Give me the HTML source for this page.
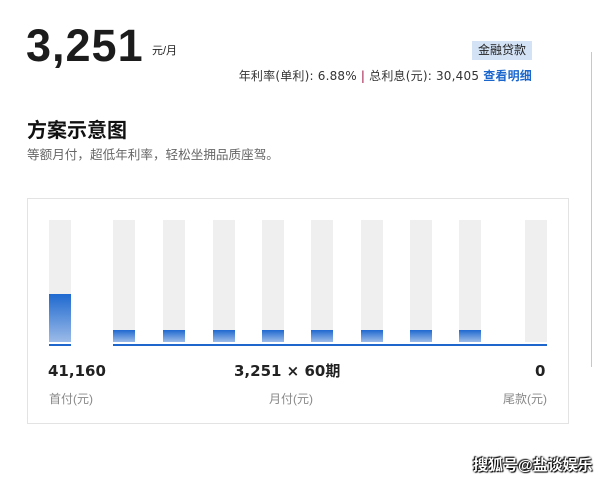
<!DOCTYPE html>
<html><head><meta charset="utf-8"><style>
*{margin:0;padding:0;box-sizing:border-box}
body{width:612px;height:481px;background:#fff;position:relative;overflow:hidden;font-family:"Liberation Sans","Noto Sans CJK SC",sans-serif;color:#222}
.a{position:absolute;white-space:nowrap}
.bar{position:absolute;top:220px;width:22px;height:122px;background:#efefef}
.fill{position:absolute;left:0;bottom:0;width:100%;background:linear-gradient(#1f69d0,#9cbbe8)}
.num{position:absolute;top:361px;height:20px;line-height:20px;font-size:15px;font-weight:bold;color:#222;font-family:"DejaVu Sans","Noto Sans CJK SC",sans-serif;white-space:nowrap}
</style></head><body>
<div class="a" style="left:26px;top:20px;font-size:45px;font-weight:bold;color:#1c1c1c;letter-spacing:1px">3,251</div>
<div class="a" style="left:152px;top:42px;font-size:11px">元/月</div>
<div class="a" style="left:472px;top:41px;width:60px;height:19px;background:#d3e2f5;font-size:12px;line-height:19px;text-align:center">金融贷款</div>
<div class="a" style="right:80px;top:67px;font-size:12px;color:#333;font-family:'DejaVu Sans','Noto Sans CJK SC',sans-serif;letter-spacing:0.2px">年利率(单利): 6.88% <span style="color:#a01040">|</span> 总利息(元): 30,405 <b style="color:#1a66cc">查看明细</b></div>
<div class="a" style="left:27px;top:114px;font-size:20px;font-weight:bold;color:#111">方案示意图</div>
<div class="a" style="left:27px;top:144px;font-size:12.6px;color:#666">等额月付，超低年利率，轻松坐拥品质座驾。</div>
<div class="a" style="left:591px;top:52px;width:1px;height:315px;background:#c8c8c8"></div>
<div class="a" style="left:27px;top:198px;width:542px;height:226px;border:1px solid #e3e3e3"></div>
<div class="bar" style="left:49px"><div class="fill" style="height:48px"></div></div>
<div class="bar" style="left:113px"><div class="fill" style="height:12px"></div></div>
<div class="bar" style="left:163px"><div class="fill" style="height:12px"></div></div>
<div class="bar" style="left:213px"><div class="fill" style="height:12px"></div></div>
<div class="bar" style="left:262px"><div class="fill" style="height:12px"></div></div>
<div class="bar" style="left:311px"><div class="fill" style="height:12px"></div></div>
<div class="bar" style="left:361px"><div class="fill" style="height:12px"></div></div>
<div class="bar" style="left:410px"><div class="fill" style="height:12px"></div></div>
<div class="bar" style="left:459px"><div class="fill" style="height:12px"></div></div>
<div class="bar" style="left:525px"></div>
<div class="a" style="left:49px;top:344px;width:22px;height:2px;background:#1f66cc"></div>
<div class="a" style="left:113px;top:344px;width:434px;height:2px;background:#1f66cc"></div>
<div class="num" style="left:48px">41,160</div>
<div class="num" style="left:234px">3,251 × 60期</div>
<div class="num" style="left:535px">0</div>
<div class="a" style="left:49px;top:390px;font-size:12px;color:#888">首付(元)</div>
<div class="a" style="left:269px;top:390px;font-size:12px;color:#888">月付(元)</div>
<div class="a" style="left:503px;top:390px;font-size:12px;color:#888">尾款(元)</div>
<div class="a" style="left:473px;top:454px;font-size:15px;font-weight:bold;color:#fff;text-shadow:0 0 2px #000,1px 1px 1px #000,-1px -1px 1px #000">搜狐号@盐谈娱乐</div>
</body></html>
